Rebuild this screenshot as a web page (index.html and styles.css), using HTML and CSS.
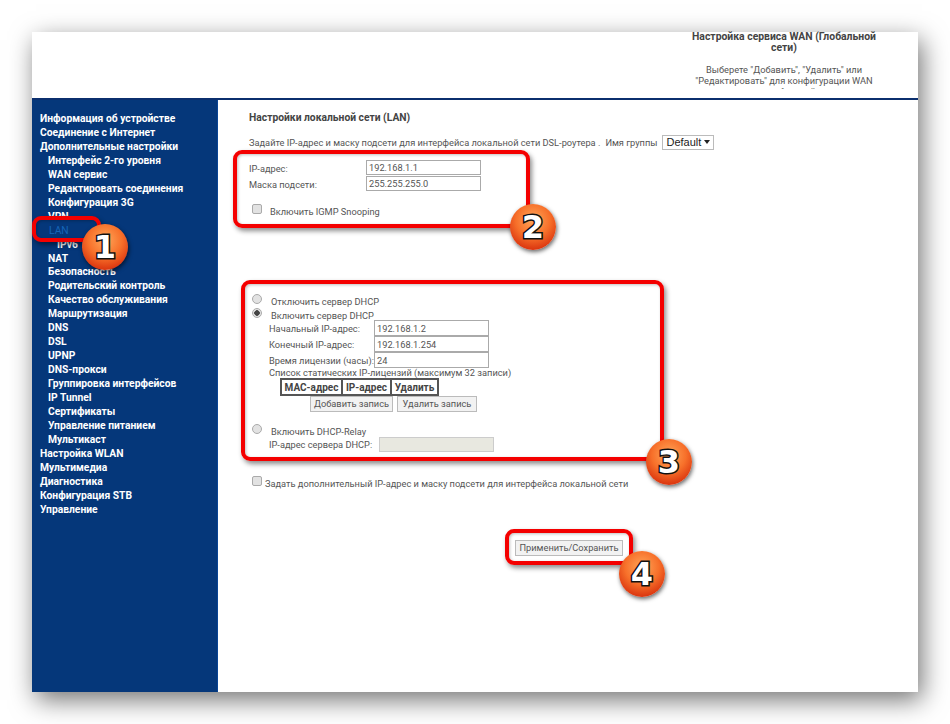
FILE: index.html
```html
<!DOCTYPE html>
<html lang="ru">
  <head>
    <meta charset="UTF-8" />
    <title>Настройки локальной сети (LAN)</title>
    <link rel="stylesheet" href="styles.css">
  </head>
  <body>
    <div class="window">
      <div class="header">
        <div class="header-text">
          <h2>Настройка сервиса WAN (Глобальной сети)</h2>
          <p>Выберете "Добавить", "Удалить" или "Редактировать" для конфигурации WAN сервисов выбранной линии</p>
        </div>
      </div>
      <div class="page">
        <ul class="menu">
          <li>Информация об устройстве</li>
          <li>Соединение с Интернет</li>
          <li>Дополнительные настройки</li>
          <li class="sub">Интерфейс 2-го уровня</li>
          <li class="sub">WAN сервис</li>
          <li class="sub">Редактировать соединения</li>
          <li class="sub">Конфигурация 3G</li>
          <li class="sub">VPN</li>
          <li class="sub current">LAN</li>
          <li class="subsub">IPv6 Tunneling</li>
          <li class="sub">NAT</li>
          <li class="sub">Безопасность</li>
          <li class="sub">Родительский контроль</li>
          <li class="sub">Качество обслуживания</li>
          <li class="sub">Маршрутизация</li>
          <li class="sub">DNS</li>
          <li class="sub">DSL</li>
          <li class="sub">UPNP</li>
          <li class="sub">DNS-прокси</li>
          <li class="sub">Группировка интерфейсов</li>
          <li class="sub">IP Tunnel</li>
          <li class="sub">Сертификаты</li>
          <li class="sub">Управление питанием</li>
          <li class="sub">Мультикаст</li>
          <li>Настройка WLAN</li>
          <li>Мультимедиа</li>
          <li>Диагностика</li>
          <li>Конфигурация STB</li>
          <li>Управление</li>
        </ul>
        <div class="content">
          <h1>Настройки локальной сети (LAN)</h1>
          <div class="intro">
            <span>Задайте IP-адрес и маску подсети для интерфейса локальной сети DSL-роутера .</span>
            <span>Имя группы</span>
            <select class="group"><option>Default</option></select>
          </div>

          <div class="lan-fields">
            <label>IP-адрес:</label><input type="text" value="192.168.1.1" />
            <label>Маска подсети:</label><input type="text" value="255.255.255.0" />
          </div>
          <label class="check igmp"><input type="checkbox" /><span>Включить IGMP Snooping</span></label>

          <div class="dhcp">
            <label class="radio"><input type="radio" name="dhcp" /><span>Отключить сервер DHCP</span></label>
            <label class="radio"><input type="radio" name="dhcp" checked /><span>Включить сервер DHCP</span></label>
            <div class="dhcp-fields">
              <label>Начальный IP-адрес:</label><input type="text" value="192.168.1.2" />
              <label>Конечный IP-адрес:</label><input type="text" value="192.168.1.254" />
              <label>Время лицензии (часы):</label><input type="text" value="24" />
            </div>
            <div class="static-title">Список статических IP-лицензий (максимум 32 записи)</div>
            <table class="leases">
              <tr><th class="col-mac">MAC-адрес</th><th class="col-ip">IP-адрес</th><th class="col-del">Удалить</th></tr>
            </table>
            <div class="lease-buttons">
              <button class="btn-add">Добавить запись</button>
              <button class="btn-del">Удалить запись</button>
            </div>
            <label class="radio relay"><input type="radio" name="dhcp" /><span>Включить DHCP-Relay</span></label>
            <div class="relay-row">
              <label>IP-адрес сервера DHCP:</label><input type="text" disabled />
            </div>
          </div>

          <label class="check extra"><input type="checkbox" /><span>Задать дополнительный IP-адрес и маску подсети для интерфейса локальной сети</span></label>

          <div class="save"><button>Применить/Сохранить</button></div>
        </div>
      </div>
    </div>

    <!-- red marks on top of the screenshot -->
    <div class="mark mark-1"></div>
    <div class="mark mark-2"></div>
    <div class="mark mark-3"></div>
    <div class="mark mark-4"></div>
    <div class="badge badge-1">1</div>
    <div class="badge badge-2">2</div>
    <div class="badge badge-3">3</div>
    <div class="badge badge-4">4</div>
  </body>
</html>
```

FILE: styles.css
```css
html,
body {
  margin: 0;
  padding: 0;
  height: 100%;
  overflow: hidden;
  background: #fff;
}

body {
  padding: 32px;
  box-sizing: border-box;
  position: relative;
  font-family: Roboto, sans-serif;
  font-size: 9.25px;
  color: #555;
}

.window {
  width: 886px;
  height: 660px;
  display: flex;
  flex-direction: column;
  background: #fff;
  box-shadow: 4px 8px 24px rgba(0, 0, 0, 0.55);
}

.header {
  height: 66px;
  flex: none;
  border-bottom: 2px solid #0b2f6e;
}

.header-text {
  width: 204px;
  height: 58px;
  margin: -1px 0 0 650px;
  overflow: hidden;
  text-align: center;
}

.header-text h2 {
  margin: 0;
  font-size: 10.4px;
  line-height: 11px;
  color: #444;
}

.header-text p {
  margin: 11px 0 0;
  line-height: 11px;
}

.page {
  flex: 1;
  display: flex;
  min-height: 0;
}

.menu {
  width: 186px;
  flex: none;
  margin: 0;
  padding: 12px 0 0 8px;
  box-sizing: border-box;
  list-style: none;
  background: #05377a;
  border-right: 1px solid #0a4596;
  color: #fff;
  font-weight: bold;
  font-size: 10.3px;
  line-height: 13.96px;
}

.menu .sub {
  padding-left: 8px;
}

.menu .subsub {
  padding-left: 17px;
}

.menu .current {
  padding-left: 9px;
  color: #1565b8;
  font-weight: normal;
}

.content {
  flex: 1;
  padding: 11px 0 0 31px;
}

h1 {
  margin: 0;
  font-size: 10.3px;
  line-height: 14px;
  color: #444;
}

.intro {
  display: flex;
  align-items: center;
  gap: 5px;
  margin-top: 9px;
  height: 16px;
}

.group {
  appearance: none;
  width: 52px;
  height: 15px;
  padding: 0 0 0 3px;
  font-family: "Liberation Sans", sans-serif;
  font-size: 11px;
  color: #222;
  background: #fff url("data:image/svg+xml,%3Csvg xmlns='http://www.w3.org/2000/svg' width='6' height='4'%3E%3Cpath d='M0 0h6L3 4z' fill='%23222'/%3E%3C/svg%3E") no-repeat right 3px center;
  border: 1px solid #bbb;
  border-radius: 0;
}

input[type="text"] {
  box-sizing: border-box;
  padding: 0 2px;
  font-family: Roboto, sans-serif;
  font-size: 9.25px;
  color: #555;
  border: 1px solid #aaa;
  border-radius: 0;
  background: #fff;
  outline: none;
}

.lan-fields {
  display: grid;
  grid-template-columns: 117px 115px;
  row-gap: 1px;
  align-items: center;
  margin-top: 10px;
}

.lan-fields label {
  padding-top: 1px;
}

.lan-fields input {
  height: 15px;
  width: 115px;
}

input[type="checkbox"],
input[type="radio"] {
  appearance: none;
  margin: 0 0 4px;
  width: 10px;
  height: 10px;
  flex: none;
  border: 1px solid #aaa;
  border-radius: 2px;
  background: #e2e2e2;
}

input[type="radio"] {
  border-radius: 50%;
}

input[type="radio"]:checked {
  background: radial-gradient(circle, #444 0 2.5px, #e2e2e2 3px);
}

.check {
  display: flex;
  align-items: center;
}

.igmp {
  margin: 14px 0 0 3px;
  gap: 8px;
  height: 12px;
}

.dhcp {
  margin-top: 77px;
}

.radio {
  display: flex;
  align-items: center;
  gap: 9px;
  height: 14px;
  margin-left: 3px;
}

.dhcp-fields {
  display: grid;
  grid-template-columns: 105px 115px;
  align-items: center;
  margin: -2px 0 0 20px;
}

.dhcp-fields label {
  white-space: nowrap;
}

.dhcp-fields input {
  width: 115px;
  height: 16px;
}

.static-title {
  margin: -1px 0 0 20px;
  line-height: 11px;
}

.leases {
  margin: 0 0 0 31px;
  border-collapse: collapse;
  table-layout: fixed;
}

.leases th {
  padding: 0;
  height: 14px;
  font-size: 10px;
  color: #444;
  border: 2px solid #555;
}

.col-mac {
  width: 59px;
}

.col-ip {
  width: 47px;
}

.col-del {
  width: 45px;
}

.lease-buttons {
  display: flex;
  gap: 4px;
  margin-left: 61px;
  height: 16px;
}

button {
  padding: 0;
  height: 16px;
  font-family: Roboto, sans-serif;
  font-size: 9.25px;
  line-height: 14px;
  white-space: nowrap;
  color: #555;
  background: #f2f2f2;
  border: 1px solid #bbb;
  border-radius: 0;
}

.btn-add {
  width: 83px;
}

.btn-del {
  width: 80px;
}

.relay {
  margin-top: 12px;
}

.relay-row {
  display: flex;
  align-items: center;
  margin: -1px 0 0 20px;
}

.relay-row label {
  width: 110px;
  white-space: nowrap;
}

.relay-row input {
  width: 115px;
  height: 15px;
  background: #e8e8e0;
  border-color: #ccc;
}

.extra {
  margin: 25px 0 0 3px;
  gap: 3px;
  height: 12px;
}

.save {
  margin: 51px 0 0 266px;
}

.save button {
  width: 108px;
}

.mark {
  position: absolute;
  box-sizing: border-box;
  border: 4px solid #f40000;
  border-radius: 9px;
  box-shadow: 2px 3px 5px rgba(0, 0, 0, 0.45), inset 1px 1px 3px rgba(0, 0, 0, 0.25);
}

.mark-1 {
  left: 32px;
  top: 216px;
  width: 69px;
  height: 26px;
}

.mark-2 {
  left: 233px;
  top: 150px;
  width: 297px;
  height: 78px;
}

.mark-3 {
  left: 241px;
  top: 280px;
  width: 423px;
  height: 181px;
}

.mark-4 {
  left: 505px;
  top: 529px;
  width: 128px;
  height: 36px;
}

.badge {
  position: absolute;
  width: 46px;
  height: 46px;
  border-radius: 50%;
  background: radial-gradient(circle at 50% 35%, #ffa75a 0, #f7702a 45%, #d52a0a 85%, #b81c05 100%);
  box-shadow: 1px 2px 4px rgba(0, 0, 0, 0.6);
  font-family: "DejaVu Sans", sans-serif;
  font-weight: bold;
  font-size: 32px;
  line-height: 46px;
  text-align: center;
  color: #fff;
  -webkit-text-stroke: 3px #111;
  paint-order: stroke fill;
}

.badge-1 {
  left: 82px;
  top: 224px;
}

.badge-2 {
  left: 510px;
  top: 204px;
}

.badge-3 {
  left: 646px;
  top: 439px;
}

.badge-4 {
  left: 619px;
  top: 551px;
}
```
